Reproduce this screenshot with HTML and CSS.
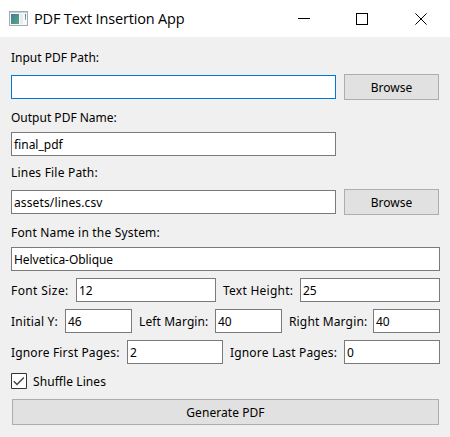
FILE: index.html
```html
<!DOCTYPE html>
<html lang="en">
<head>
<meta charset="utf-8">
<title>PDF Text Insertion App</title>
<link rel="stylesheet" href="styles.css">
</head>
<body>
<header class="titlebar">
  <svg class="app-icon" width="20" height="16" viewBox="0 0 20 16">
    <defs>
      <linearGradient id="pane" x1="0" y1="0" x2="1" y2="1"><stop offset="0" stop-color="#4478a4"/><stop offset="1" stop-color="#55ad78"/></linearGradient>
      <linearGradient id="bar" x1="0" y1="0" x2="0" y2="1"><stop offset="0" stop-color="#4a7fa8"/><stop offset="1" stop-color="#79b98c"/></linearGradient>
    </defs>
    <path fill="#a5abb2" d="M0 0h19v15H0z"/>
    <path fill="#c9ced5" d="M1 1h17v1H1z"/>
    <path fill="#f8f9fa" d="M1 2h17v12H1z"/>
    <path fill="url(#pane)" d="M2 3h8v10H2z"/>
    <path fill="#e9ecef" d="M11 3h3v10h-3z"/>
    <path fill="url(#bar)" d="M16 3h1v6h-1z"/>
  </svg>
  <h1 class="title">PDF Text Insertion App</h1>
  <svg class="controls" width="130" height="12" viewBox="0 0 130 12" fill="none" stroke="#000">
    <path d="M0 5.5h12M58.5.5h11v11h-11z" shape-rendering="crispEdges"/>
    <path d="M117.4.4l11.2 11.2M128.6.4l-11.2 11.2"/>
  </svg>
</header>
<main class="form">
  <label class="caption c1">Input PDF Path:</label>
  <div class="row tall"><div class="field path focused"></div><button class="button">Browse</button></div>
  <label class="caption c2">Output PDF Name:</label>
  <div class="row"><div class="field path">final_pdf</div></div>
  <label class="caption c3">Lines File Path:</label>
  <div class="row tall"><div class="field path csv">assets/lines.csv</div><button class="button">Browse</button></div>
  <label class="caption c4">Font Name in the System:</label>
  <div class="row"><div class="field font-name">Helvetica-Oblique</div></div>
  <div class="row">
    <label class="font-size">Font Size:</label><div class="field">12</div>
    <label class="text-height">Text Height:</label><div class="field">25</div>
  </div>
  <div class="row">
    <label class="initial-y">Initial Y:</label><div class="field">46</div>
    <label class="left-margin">Left Margin:</label><div class="field">40</div>
    <label class="right-margin">Right Margin:</label><div class="field">40</div>
  </div>
  <div class="row">
    <label class="first">Ignore First Pages:</label><div class="field">2</div>
    <label class="last">Ignore Last Pages:</label><div class="field">0</div>
  </div>
  <div class="check-row">
    <svg width="16" height="16" viewBox="0 0 16 16"><path d="M.5.5h15v15H.5z" fill="#fff" stroke="#333"/><path d="M2.8 8.2l3.2 3.3 6.9-7" fill="none" stroke="#444" stroke-width="1.4"/></svg>
    <label>Shuffle Lines</label>
  </div>
  <button class="button generate">Generate PDF</button>
</main>
</body>
</html>
```
FILE: styles.css
```css
* { box-sizing: border-box; }
body {
  margin: 0;
  width: 450px;
  height: 437px;
  overflow: hidden;
  background: #f0f0f0;
  color: #000;
  font: 12px/18px "Noto Sans", sans-serif;
}
.titlebar {
  height: 37px;
  display: flex;
  align-items: center;
  background: #fff;
  padding: 0 22px 0 9px;
}
.app-icon { flex: none; margin-right: 5px; }
.title {
  margin: 0;
  font: 14.5px/20px "Open Sans", sans-serif;
  letter-spacing: -0.17px;
  white-space: nowrap;
  flex: 1;
}
.controls { flex: none; }
.form {
  display: flex;
  flex-direction: column;
  gap: 7px;
  padding: 12px 10px 0 11px;
}
.caption { height: 18px; white-space: nowrap; }
.c2 { padding-top: 2px; }
.c3 { height: 19px; padding-top: 1px; letter-spacing: 0.2px; }
.c4 { padding-top: 2px; letter-spacing: 0.18px; }
.row { display: flex; align-items: center; height: 24px; white-space: nowrap; }
.tall { height: 26px; }
.row label { flex: none; padding-top: 2px; }
.field {
  flex: 1 1 0;
  min-width: 0;
  height: 24px;
  border: 1px solid #7a7a7a;
  background: #fff;
  padding: 2px 0 0 2px;
  line-height: 20px;
}
.path { flex: 0 0 325px; }
.csv { letter-spacing: 0.13px; }
.font-name { letter-spacing: -0.05px; }
.focused { border-color: #0078d7; }
.button {
  flex: none;
  width: 95px;
  height: 26px;
  margin: 0 0 0 8px;
  padding: 2px 0 0;
  border: 1px solid #adadad;
  background: #e1e1e1;
  color: #000;
  font: inherit;
}
.row .font-size { width: 65px; letter-spacing: 0.4px; }
.row .text-height { width: 84px; padding-left: 7px; letter-spacing: 0.25px; }
.row .initial-y { width: 54px; letter-spacing: 0.2px; }
.row .left-margin { width: 83px; padding-left: 7px; letter-spacing: 0.1px; }
.row .right-margin { width: 91px; padding-left: 7px; letter-spacing: 0.15px; }
.row .first { width: 116px; letter-spacing: 0.17px; }
.row .last { width: 121px; padding-left: 7px; letter-spacing: 0.17px; }
.check-row { display: flex; align-items: center; gap: 6px; height: 16px; margin-top: 2px; }
.check-row svg { flex: none; }
.check-row label { padding-top: 2px; letter-spacing: 0.08px; }
.generate { width: 427px; margin: 3px 0 0 1px; letter-spacing: 0.06px; }
```
